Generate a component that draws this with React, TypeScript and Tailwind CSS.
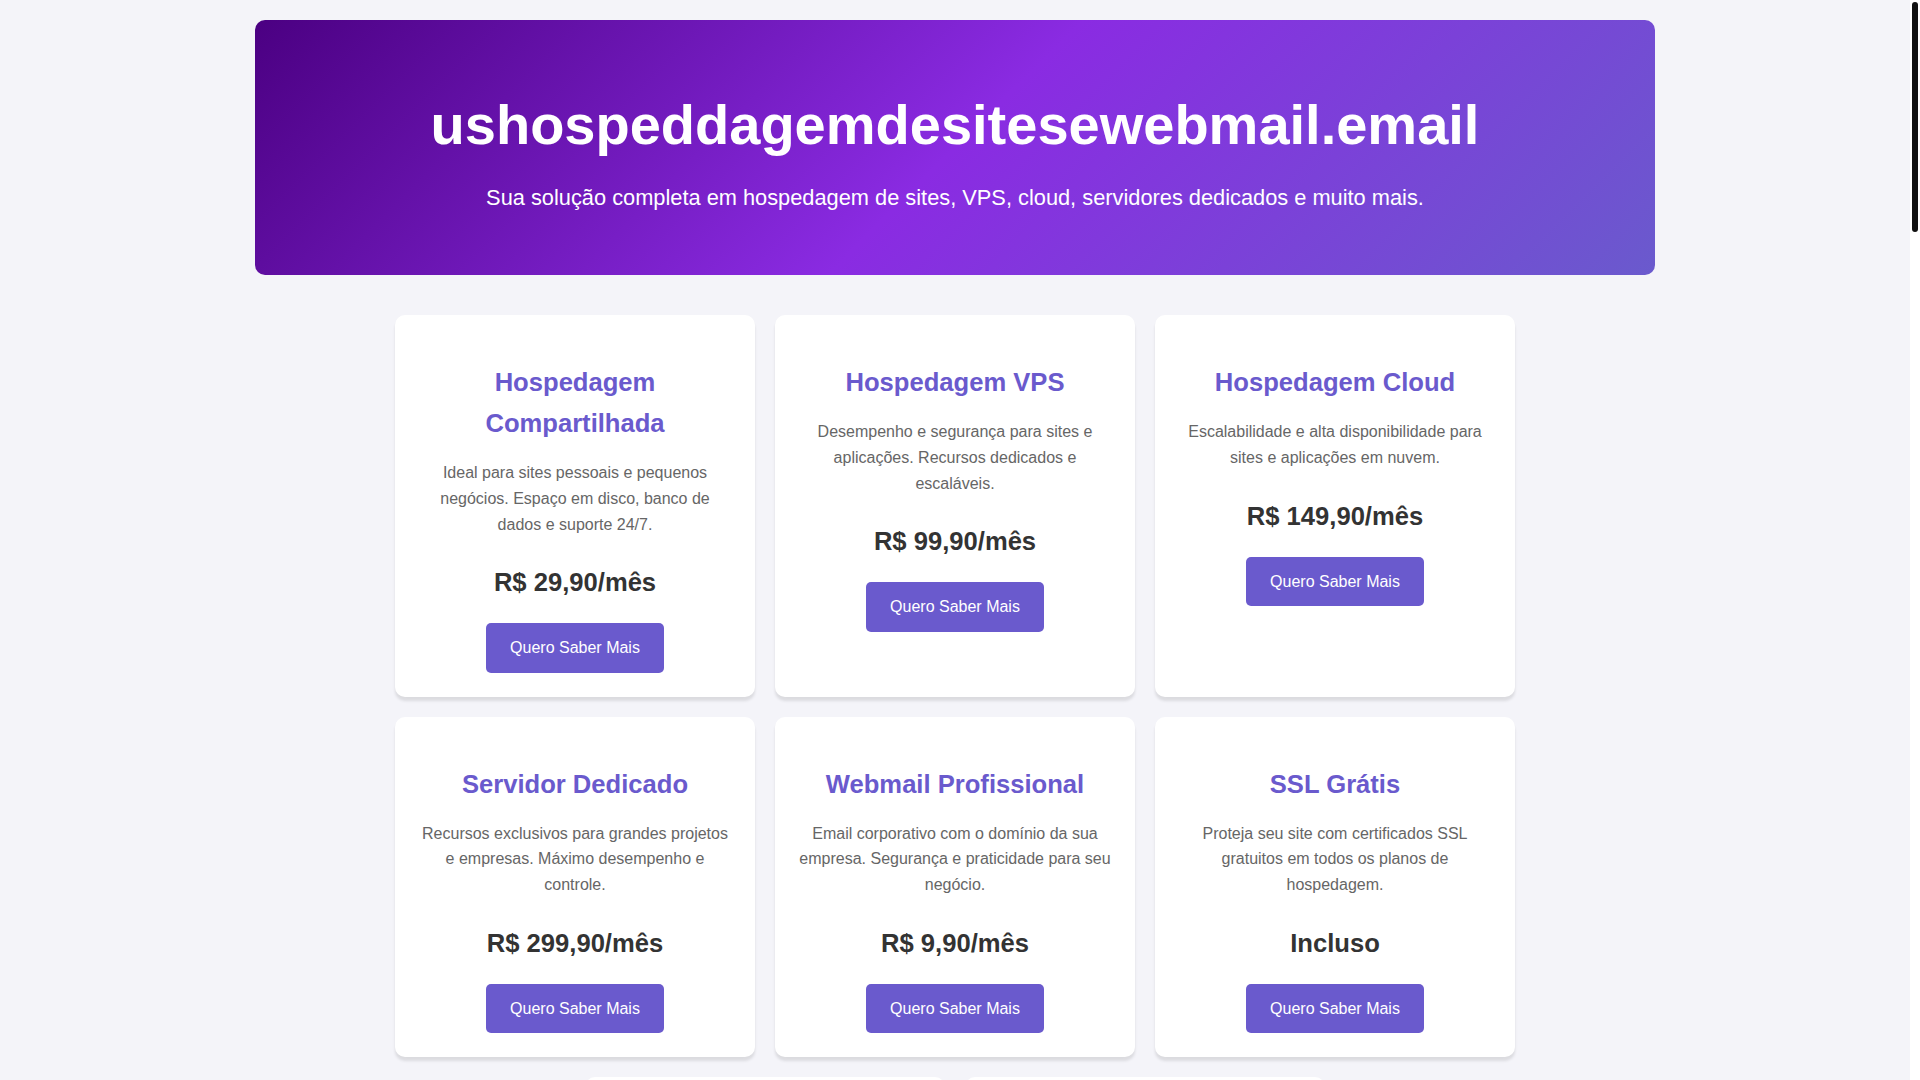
import React from "react";

type Plan = { title: string; desc: string; price: string };

const plans: Plan[] = [
  {
    title: "Hospedagem Compartilhada",
    desc: "Ideal para sites pessoais e pequenos negócios. Espaço em disco, banco de dados e suporte 24/7.",
    price: "R$ 29,90/mês",
  },
  {
    title: "Hospedagem VPS",
    desc: "Desempenho e segurança para sites e aplicações. Recursos dedicados e escaláveis.",
    price: "R$ 99,90/mês",
  },
  {
    title: "Hospedagem Cloud",
    desc: "Escalabilidade e alta disponibilidade para sites e aplicações em nuvem.",
    price: "R$ 149,90/mês",
  },
  {
    title: "Servidor Dedicado",
    desc: "Recursos exclusivos para grandes projetos e empresas. Máximo desempenho e controle.",
    price: "R$ 299,90/mês",
  },
  {
    title: "Webmail Profissional",
    desc: "Email corporativo com o domínio da sua empresa. Segurança e praticidade para seu negócio.",
    price: "R$ 9,90/mês",
  },
  {
    title: "SSL Grátis",
    desc: "Proteja seu site com certificados SSL gratuitos em todos os planos de hospedagem.",
    price: "Incluso",
  },
  {
    title: "Registro de Domínios",
    desc: "Registre seu domínio .com, .com.br e muitas outras extensões com preços acessíveis.",
    price: "R$ 39,90/ano",
  },
  {
    title: "Revenda de Hospedagem",
    desc: "Comece seu próprio negócio de hospedagem com painel de controle e suporte completo.",
    price: "R$ 59,90/mês",
  },
];

function Card({ p }: { p: Plan }) {
  return (
    <div className="w-[360px] bg-white rounded-[10px] shadow-[0_4px_3px_rgba(0,0,0,0.1)] px-[23px] pt-[47px] pb-[24px] text-center flex flex-col items-center">
      <h3 className="text-[25.6px] leading-[41px] font-bold text-[#6a5acd] mb-[16px]">{p.title}</h3>
      <p className="text-[16px] leading-[25.6px] text-[#666] mb-[25px]">{p.desc}</p>
      <div className="text-[25.6px] leading-[41px] font-bold text-[#333] mb-[20px]">{p.price}</div>
      <button className="bg-[#6a5acd] text-white text-[16px] leading-[25.6px] px-6 py-3 rounded-[5px]">
        Quero Saber Mais
      </button>
    </div>
  );
}

export default function App() {
  return (
    <div
      className="bg-[#f4f4f9] min-h-[5050px] flex flex-col pr-[10px]"
      style={{ fontFamily: '"Liberation Sans", Arial, sans-serif' }}
    >
      <div className="fixed top-0 right-0 h-screen w-[10px] bg-white">
        <div className="mx-auto mt-[2px] h-[230px] w-[6px] rounded-full bg-[#111]" />
      </div>

      <header className="mx-auto mt-5 w-[1400px] rounded-[10px] bg-[linear-gradient(135deg,#4b0082,#8a2be2,#6a5acd)] py-[60px] px-5 text-center text-white">
        <h1 className="text-[56px] leading-[1.6] font-bold mb-[11px]">ushospeddagemdesitesewebmail.email</h1>
        <p className="text-[21.8px] leading-[1.6]">
          Sua solução completa em hospedagem de sites, VPS, cloud, servidores dedicados e muito mais.
        </p>
      </header>

      <main className="mx-auto mt-[40px] w-[1120px] flex flex-wrap justify-center gap-5">
        {plans.map((p) => (
          <Card key={p.title} p={p} />
        ))}
      </main>

      <section className="mx-auto mt-[60px] w-[1120px] text-center">
        <h2 className="text-[32px] leading-[1.6] font-bold text-[#6a5acd] mb-5">Por que escolher a nossa hospedagem?</h2>
        <div className="grid grid-cols-3 gap-5 text-left">
          {[
            ["Suporte 24/7", "Equipe especializada pronta para ajudar a qualquer hora do dia."],
            ["Uptime 99,9%", "Infraestrutura robusta para manter seu site sempre no ar."],
            ["Backups diários", "Seus dados protegidos com cópias de segurança automáticas."],
          ].map(([t, d]) => (
            <div key={t} className="bg-white rounded-[10px] p-5 shadow-[0_4px_3px_rgba(0,0,0,0.1)]">
              <h3 className="text-[20px] leading-[1.6] font-bold text-[#333] mb-2">{t}</h3>
              <p className="text-[16px] leading-[1.6] text-[#666]">{d}</p>
            </div>
          ))}
        </div>
      </section>

      <footer className="mt-auto bg-[#333] text-white text-center py-5 text-[16px] leading-[1.6]">
        © 2024 ushospeddagemdesitesewebmail.email - Todos os direitos reservados.
      </footer>
    </div>
  );
}
